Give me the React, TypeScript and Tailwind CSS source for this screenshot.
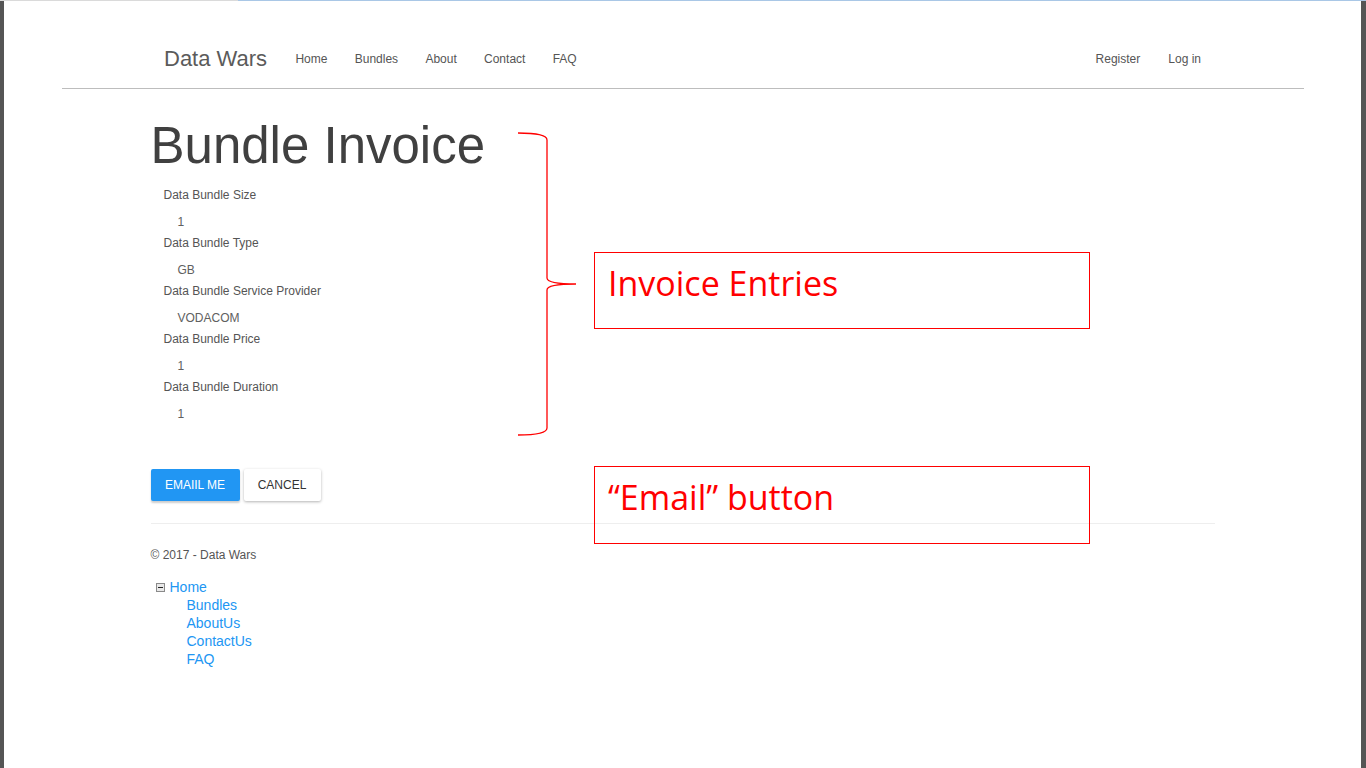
import React from 'react';

const entries = [
  { label: 'Data Bundle Size', value: '1' },
  { label: 'Data Bundle Type', value: 'GB' },
  { label: 'Data Bundle Service Provider', value: 'VODACOM' },
  { label: 'Data Bundle Price', value: '1' },
  { label: 'Data Bundle Duration', value: '1' },
];

const navLinks = ['Home', 'Bundles', 'About', 'Contact', 'FAQ'];
const treeChildren = ['Bundles', 'AboutUs', 'ContactUs', 'FAQ'];

const MinusBox = () => (
  <svg width="9" height="9" viewBox="0 0 9 9" className="shrink-0">
    <rect x="0.5" y="0.5" width="8" height="8" fill="#e8e8e8" stroke="#8a8a8a" />
    <line x1="2" y1="4.5" x2="7" y2="4.5" stroke="#222" strokeWidth="1" />
  </svg>
);

const App = () => {
  return (
    <div className="relative h-screen min-h-[768px] flex flex-col bg-white font-['Liberation_Sans',Arial,sans-serif] overflow-hidden">
      <div className="flex h-px shrink-0">
        <div className="w-[238px] bg-[#dadada]" />
        <div className="flex-1 bg-[#a9c7e6]" />
      </div>

      <div className="flex flex-1">
        <div className="w-[4px] bg-[#555]" />

        <div className="flex-1">
          <nav className="h-[88px] pt-[28px] ml-[58px] mr-[57px] border-b border-[#bdbdbd]">
            <div className="w-[1064px] mx-auto h-full flex items-center justify-between px-[13px]">
              <div className="flex items-center gap-[27.3px]">
                <span className="text-[22px] text-[#5b5b5b] mr-[1px]">Data Wars</span>
                {navLinks.map((l) => (
                  <a key={l} className="text-[12px] text-[#555]">{l}</a>
                ))}
              </div>
              <div className="flex items-center gap-[27px] pr-[1px]">
                <a className="text-[12px] text-[#555] mr-[1px]">Register</a>
                <a className="text-[12px] text-[#555]">Log in</a>
              </div>
            </div>
          </nav>

          <main className="w-[1064px] mx-auto">
            <h2 className="mt-[31px] text-[51px] leading-none text-[#404040]">Bundle Invoice</h2>

            <dl className="mt-[14px] pl-[13px] text-[12px]">
              {entries.map((e) => (
                <div key={e.label}>
                  <dt className="leading-[20px] text-[#555]">{e.label}</dt>
                  <dd className="leading-[20px] mt-[7px] mb-[1px] pl-[14px] text-[#606060]">{e.value}</dd>
                </div>
              ))}
            </dl>

            <div className="mt-[45px] flex gap-[4px]">
              <button className="h-[32px] w-[89px] rounded-[2px] bg-[#2196f3] text-white text-[12px] shadow-[0_2px_2px_rgba(0,0,0,0.2)]">
                EMAIIL ME
              </button>
              <button className="h-[32px] w-[77px] rounded-[2px] bg-white text-[#333] text-[12px] shadow-[0_1px_3px_rgba(0,0,0,0.3)]">
                CANCEL
              </button>
            </div>

            <hr className="mt-[22px] border-t border-[#eee]" />

            <footer>
              <p className="mt-[21px] leading-[20px] text-[12px] text-[#555]">© 2017 - Data Wars</p>
              <ul className="mt-[13px] text-[14px] leading-[18px] text-[#2196f3]">
                <li className="flex items-center gap-[5px] pl-[5px]">
                  <MinusBox />
                  <span>Home</span>
                </li>
                {treeChildren.map((c) => (
                  <li key={c} className="pl-[36px]">{c}</li>
                ))}
              </ul>
            </footer>
          </main>
        </div>

        <div className="w-[5px] bg-[#555]" />
      </div>

      <svg className="absolute left-0 top-0 pointer-events-none" width="1366" height="768">
        <path
          d="M518,133 Q547,133 547,140 L547,278 Q547,284 576,284 Q547,284 547,290 L547,428 Q547,435 518,435"
          fill="none"
          stroke="#ff0000"
          strokeWidth="1.3"
        />
      </svg>

      <div className="absolute left-[594px] top-[252px] w-[496px] h-[77px] border border-[#ff0000] pt-[13px] px-[13px] font-['Open_Sans','Noto_Sans',sans-serif] text-[34px] leading-none text-[#ff0000]">
        Invoice Entries
      </div>
      <div className="absolute left-[594px] top-[466px] w-[496px] h-[78px] border border-[#ff0000] pt-[13px] px-[13px] font-['Open_Sans','Noto_Sans',sans-serif] text-[34px] leading-none text-[#ff0000]">
        “Email” button
      </div>
    </div>
  );
};

export default App;
